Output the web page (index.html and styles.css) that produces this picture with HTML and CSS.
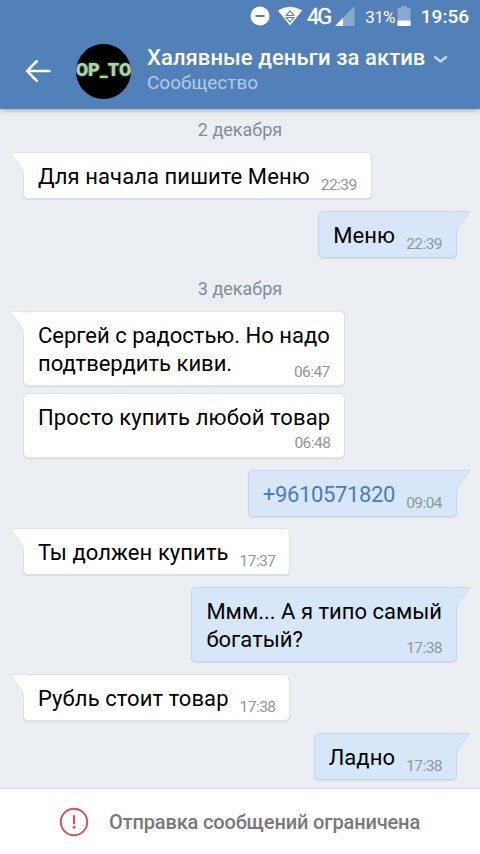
FILE: index.html
```
<!DOCTYPE html>
<html lang="ru">
<head>
    <meta charset="UTF-8">
    <meta name="viewport" content="width=device-width, initial-scale=1.0">
    <title>Халявные деньги за актив</title>
    <link rel="stylesheet" href="styles.css">
</head>
<body>
    <svg width="0" height="0" class="defs">
        <symbol id="tail" viewBox="0 0 16 24">
            <path class="tail-fill" d="M16 .5H2.5Q1.2.5 2 1.6L11.5 14.5Q14.5 18 14.5 23H16Z"/>
            <path class="tail-line" d="M16 .5H2.5Q1.2.5 2 1.6L11.5 14.5Q14.5 18 14.5 23"/>
        </symbol>
    </svg>

    <header class="header">
        <div class="status">
            <svg class="dnd" width="20" height="20" viewBox="0 0 20 20">
                <circle cx="10" cy="10" r="9.5" fill="#fff"/>
                <path d="M5.5 10h9" stroke="#5181b8" stroke-width="2"/>
            </svg>
            <svg class="wifi" width="26" height="20" viewBox="0 0 26 20">
                <path d="M.8 4.5Q13-2.8 25.2 4.5L13 19.5Z" fill="#fff"/>
                <path d="M9.2 9.5 13 4.8l3.8 4.7ZM9.2 11.5h7.6L13 16.2Z" fill="#fff" stroke="#5181b8" stroke-width="1.1"/>
            </svg>
            <span class="net">4G</span>
            <svg class="signal" width="20" height="20" viewBox="0 0 20 20">
                <path d="M0 20 19.5 0V20Z" fill="#8aa9d0"/>
                <path d="M0 20 8 12V20Z" fill="#fff"/>
            </svg>
            <span class="percent">31%</span>
            <svg class="battery" width="14" height="20" viewBox="0 0 14 20">
                <path d="M4 0h6v2h3.5v18H.5V2H4Z" fill="#8aa9d0"/>
                <path d="M.5 14.5h13V20H.5Z" fill="#fff"/>
            </svg>
            <span class="clock">19:56</span>
        </div>
        <div class="bar">
            <svg class="back" width="26" height="24" viewBox="0 0 26 24">
                <path d="M12 2 2 12l10 10M2 12h22.5" fill="none" stroke="#fff" stroke-width="2.5" stroke-linejoin="round" stroke-linecap="round"/>
            </svg>
            <div class="avatar"><span>OP_TO</span></div>
            <div class="info">
                <div class="title">
                    <span>Халявные деньги за актив</span>
                    <svg width="15" height="9" viewBox="0 0 15 9">
                        <path d="M2 2l5.5 4.5L13 2" fill="none" stroke="#c5d8ef" stroke-width="2.4" stroke-linecap="round" stroke-linejoin="round"/>
                    </svg>
                </div>
                <div class="subtitle">Сообщество</div>
            </div>
        </div>
    </header>

    <main class="chat">
        <div class="date">2 декабря</div>
        <div class="msg in">
            <svg class="tail"><use href="#tail"/></svg>
            <p>Для начала пишите Меню</p><time>22:39</time>
        </div>
        <div class="msg out">
            <svg class="tail"><use href="#tail"/></svg>
            <p>Меню</p><time>22:39</time>
        </div>

        <div class="date">3 декабря</div>
        <div class="msg in wide">
            <svg class="tail"><use href="#tail"/></svg>
            <p>Сергей с радостью. Но надо<br>подтвердить киви.</p><time>06:47</time>
        </div>
        <div class="msg in next stacked">
            <p>Просто купить любой товар</p><time>06:48</time>
        </div>
        <div class="msg out">
            <svg class="tail"><use href="#tail"/></svg>
            <p><a>+9610571820</a></p><time>09:04</time>
        </div>
        <div class="msg in">
            <svg class="tail"><use href="#tail"/></svg>
            <p>Ты должен купить</p><time>17:37</time>
        </div>
        <div class="msg out wide">
            <svg class="tail"><use href="#tail"/></svg>
            <p>Ммм... А я типо самый<br>богатый?</p><time>17:38</time>
        </div>
        <div class="msg in">
            <svg class="tail"><use href="#tail"/></svg>
            <p>Рубль стоит товар</p><time>17:38</time>
        </div>
        <div class="msg out">
            <svg class="tail"><use href="#tail"/></svg>
            <p>Ладно</p><time>17:38</time>
        </div>
    </main>

    <footer class="footer">
        <svg width="30" height="30" viewBox="0 0 30 30">
            <circle cx="15" cy="15" r="13.2" fill="none" stroke="#cf5656" stroke-width="2"/>
            <path d="M15 9v7.5" stroke="#cf5656" stroke-width="2.2" stroke-linecap="round"/>
            <circle cx="15" cy="20.3" r="1.4" fill="#cf5656"/>
        </svg>
        <span>Отправка сообщений ограничена</span>
    </footer>
</body>
</html>
```
FILE: styles.css
```
* {
    box-sizing: border-box;
}
body {
    margin: 0;
    height: 854px;
    display: flex;
    flex-direction: column;
    overflow: hidden;
    background: #ebeff4;
    font-family: Roboto, "Noto Sans", sans-serif;
    color: #000;
}
.defs {
    position: absolute;
}

/* header */
.header {
    height: 109px;
    flex: none;
    background: #5181b8;
    color: #fff;
    box-shadow: 0 1px 5px rgba(60, 75, 100, 0.5);
}
.status {
    height: 34px;
    padding-right: 11px;
    display: flex;
    justify-content: flex-end;
    align-items: center;
    line-height: 34px;
}
.status svg {
    margin-top: -2px;
}
.status .wifi {
    margin-left: 7px;
}
.net {
    margin-left: 4px;
    font-size: 22px;
    letter-spacing: -2px;
    -webkit-text-stroke: 0.3px #fff;
}
.status .signal {
    margin-left: 5px;
}
.percent {
    margin-left: 10px;
    font-size: 17px;
    letter-spacing: -0.7px;
}
.status .battery {
    margin-left: 2px;
}
.clock {
    margin-left: 10px;
    font-size: 19px;
    font-weight: 500;
}
.bar {
    height: 75px;
    padding-left: 25px;
    display: flex;
    align-items: center;
}
.back {
    margin-top: -2px;
}
.avatar {
    width: 55px;
    height: 55px;
    margin-left: 25px;
    border-radius: 50%;
    background: #000;
    overflow: hidden;
    display: flex;
    align-items: center;
    justify-content: center;
    font-size: 18px;
    line-height: 20px;
    font-weight: 900;
    color: #b9ccb8;
    text-shadow: 0 0 3px #2f9a38;
}
.avatar span {
    margin-top: -3px;
}
.info {
    margin: -4px 0 0 16px;
}
.title {
    display: flex;
    align-items: center;
    gap: 8px;
    font-size: 22px;
    line-height: 26px;
    font-weight: 500;
    letter-spacing: 0.08px;
    white-space: nowrap;
}
.title svg {
    margin-top: 3px;
}
.subtitle {
    font-size: 19px;
    line-height: 24px;
    color: #b1cbea;
}

/* messages */
.chat {
    flex: 1;
    padding: 8.6px 23px 0;
    display: flex;
    flex-direction: column;
    align-items: flex-start;
}
.date {
    align-self: center;
    height: 23px;
    font-size: 18px;
    line-height: 23px;
    color: #818c99;
}
.out + .date {
    margin-top: 18.4px;
}
.msg {
    position: relative;
    margin-top: 11.8px;
    padding: 10px 14px 7px;
    display: flex;
    gap: 11px;
    border: 1px solid #dfe4ea;
    border-radius: 5px;
    background: #fff;
    box-shadow: 0 1px 1px rgba(150, 165, 185, 0.3);
}
.msg p {
    margin: 0;
    font-size: 22px;
    line-height: 28px;
    letter-spacing: 0.08px;
    white-space: nowrap;
}
.msg time {
    align-self: flex-end;
    margin-bottom: -3px;
    font-size: 15.5px;
    line-height: 18px;
    letter-spacing: -0.55px;
    color: #919699;
}
.msg.out {
    align-self: flex-end;
    background: #d7e7f9;
    border-color: #c5d6ea;
}
.msg.next {
    margin-top: 6.5px;
}
/* time sits on the last line of text */
.msg.wide {
    display: grid;
}
.msg.wide p,
.msg.wide time {
    grid-area: 1 / 1;
}
.msg.wide p {
    letter-spacing: 0;
}
.msg.wide time {
    justify-self: end;
}
.msg.stacked {
    flex-direction: column;
    gap: 2px;
    padding-bottom: 8px;
}
.msg.stacked p {
    letter-spacing: 0.13px;
}
.msg a {
    color: #4a7db8;
    letter-spacing: -0.35px;
}
.tail {
    position: absolute;
    top: -1px;
    left: -15px;
    width: 16px;
    height: 24px;
    fill: #fff;
    stroke: #dfe4ea;
}
.out .tail {
    left: auto;
    right: -15px;
    transform: scaleX(-1);
    fill: #d7e7f9;
    stroke: #c5d6ea;
}
.tail-fill {
    stroke: none;
}
.tail-line {
    fill: none;
}

/* footer */
.footer {
    height: 66px;
    flex: none;
    padding-left: 59px;
    display: flex;
    align-items: center;
    gap: 20px;
    background: #fff;
    border-top: 1px solid #d9dde2;
    font-size: 20px;
    font-weight: 500;
    letter-spacing: -0.15px;
    color: #77797b;
}
```
